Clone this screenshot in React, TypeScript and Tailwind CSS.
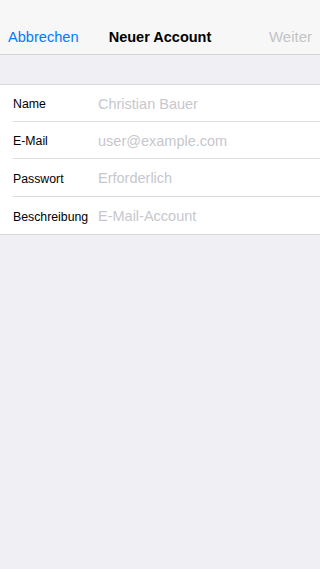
export default function App() {
  const fields = [
    { label: 'Name', placeholder: 'Christian Bauer', h: 'h-[37px]' },
    { label: 'E-Mail', placeholder: 'user@example.com', h: 'h-[37px]' },
    { label: 'Passwort', placeholder: 'Erforderlich', h: 'h-[38px]' },
    { label: 'Beschreibung', placeholder: 'E-Mail-Account', h: 'h-[37px]' },
  ]

  return (
    <div className="min-h-[569px] bg-[#efeff4] font-['Liberation_Sans',Arial,sans-serif]">
      {/* navigation bar incl. status bar area */}
      <div className="h-[55px] bg-[#f7f7f7] border-b border-[#d4d4d6] flex items-end">
        <div className="h-[34px] w-full px-2 flex items-start justify-between relative">
          <button className="text-[14.6px] text-[#007aff] leading-[18px] pt-[8px]">Abbrechen</button>
          <div className="absolute left-0 right-0 top-[8px] text-center text-[14.5px] font-bold text-black leading-[18px] pointer-events-none">
            Neuer Account
          </div>
          <button className="text-[15px] text-[#c4c4c6] leading-[18px] pt-[8px]">Weiter</button>
        </div>
      </div>

      <div className="h-[29px]" />

      <div className="bg-white border-y border-[#d9d9dc]">
        {fields.map((field, i) => (
          <div key={field.label} className="pl-[13px]">
            <div className={`${field.h} pt-[3px] flex items-center ${i < fields.length - 1 ? 'border-b border-[#dcdcdf]' : ''}`}>
              <span className="w-[85px] text-[12.3px] text-black">{field.label}</span>
              <span className="text-[14.5px] text-[#c7c7cd]">{field.placeholder}</span>
            </div>
          </div>
        ))}
      </div>
    </div>
  )
}
